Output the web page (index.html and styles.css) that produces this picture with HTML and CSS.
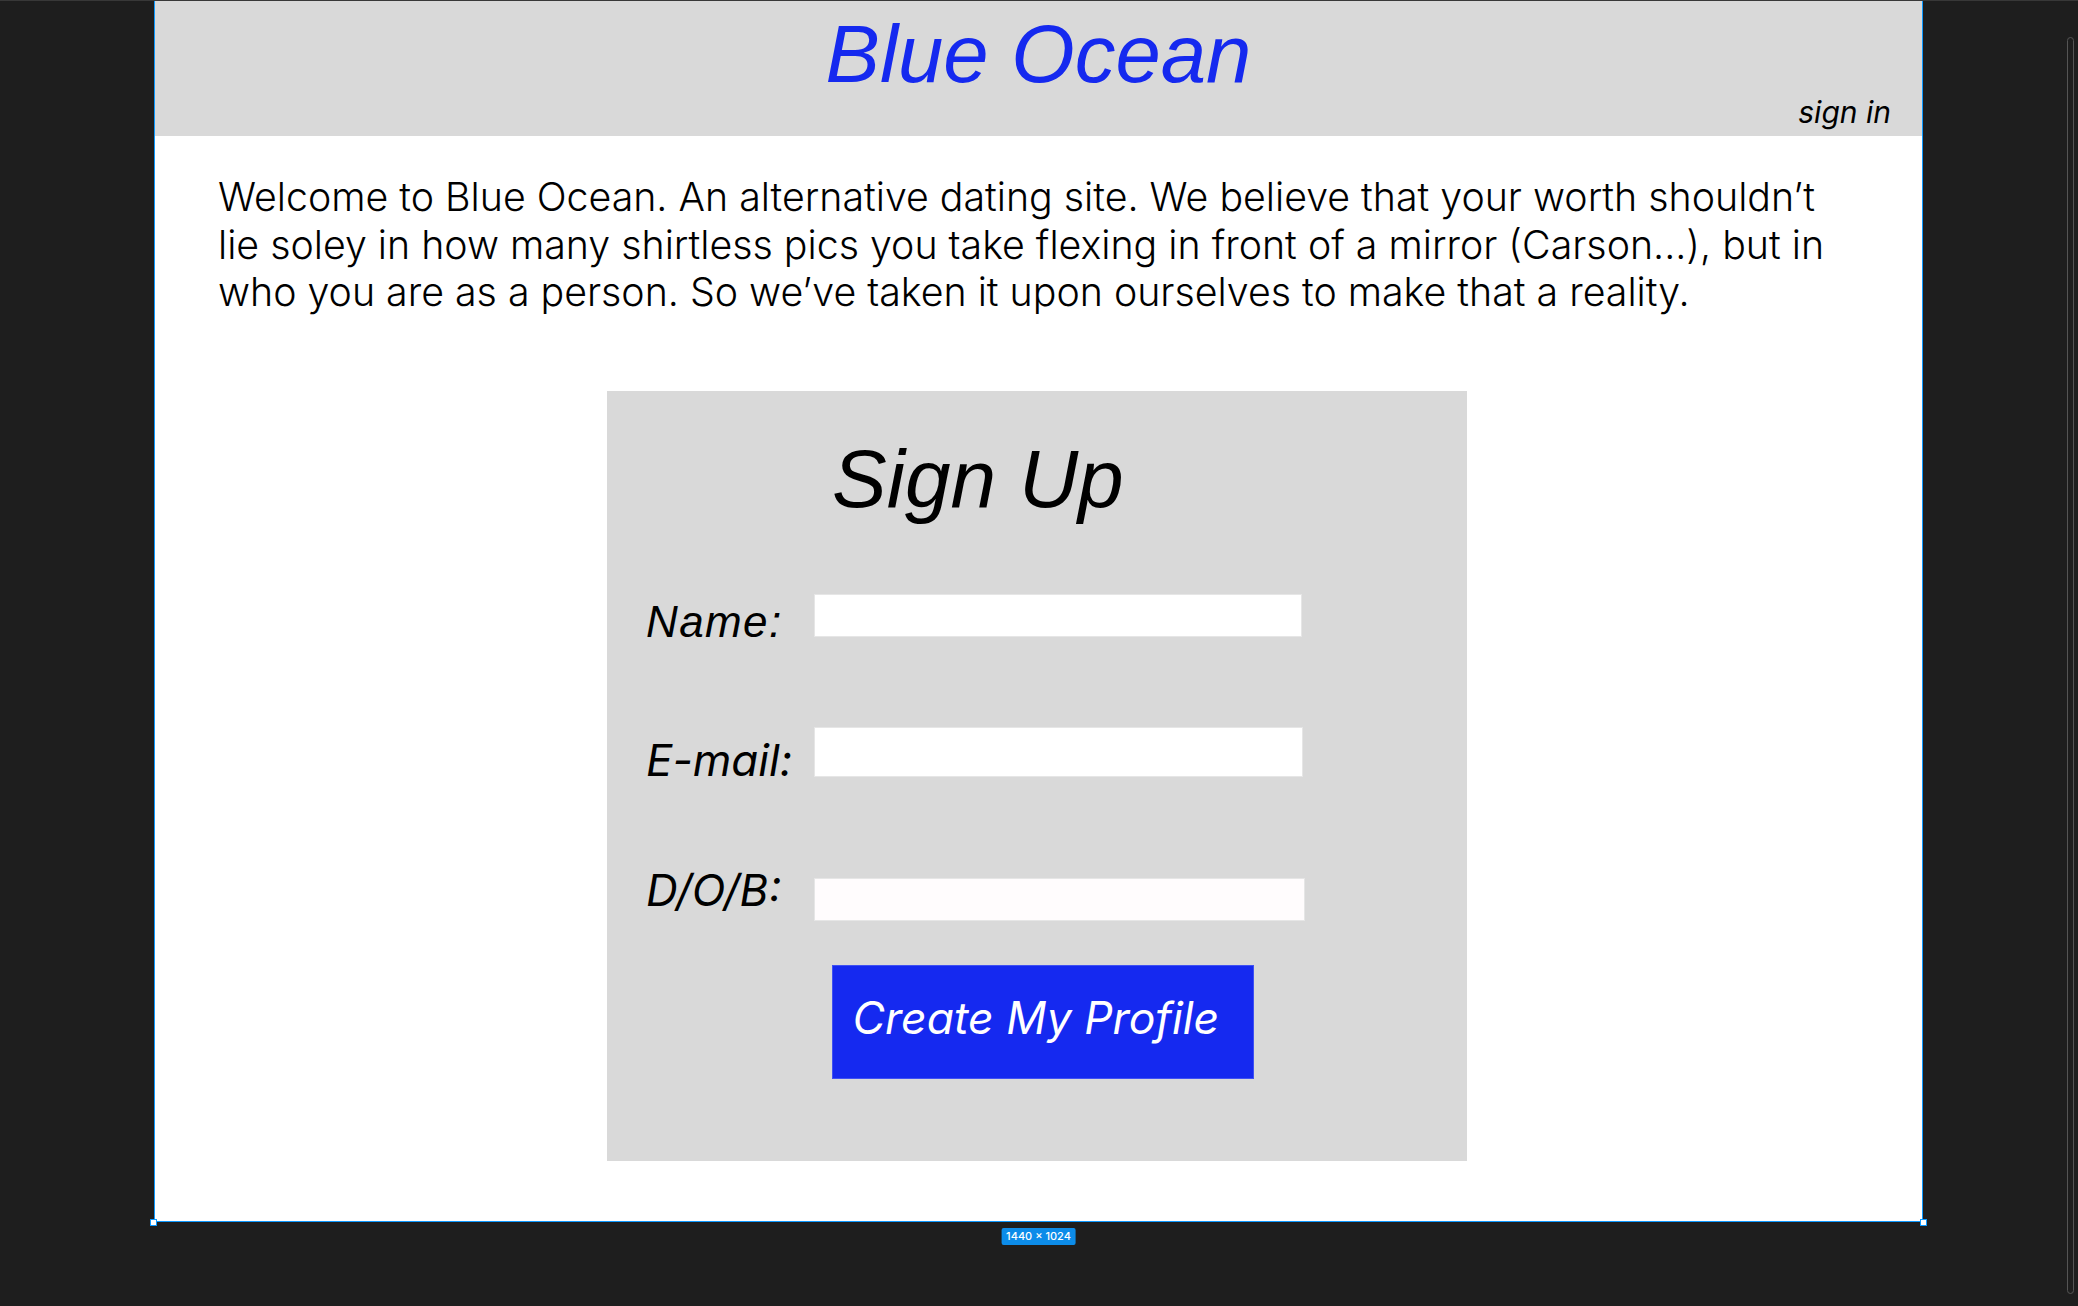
FILE: index.html
```html
<!DOCTYPE html>
<html lang="en">
<head>
<meta charset="utf-8">
<title>Blue Ocean</title>
<link rel="stylesheet" href="styles.css">
</head>
<body>
<div class="canvas">
  <div class="frame">
    <header class="site-header">
      <h1 class="brand">Blue Ocean</h1>
      <a class="signin">sign in</a>
    </header>
    <p class="intro">Welcome to Blue Ocean. An alternative dating site. We believe that your worth shouldn’t<br>lie soley in how many shirtless pics you take flexing in front of a mirror (Carson...), but in<br>who you are as a person. So we’ve taken it upon ourselves to make that a reality.</p>
    <section class="signup">
      <h2 class="signup-title">Sign Up</h2>
      <div class="row row-name">
        <label class="label label-arial">Name:</label>
        <input class="field field-name" type="text">
      </div>
      <div class="row row-email">
        <label class="label label-inter">E-mail:</label>
        <input class="field field-email" type="text">
      </div>
      <div class="row row-dob">
        <label class="label label-inter">D/O/B:</label>
        <input class="field field-dob" type="text">
      </div>
      <button class="create-btn">Create My Profile</button>
    </section>
    <span class="handle handle-bl"></span>
    <span class="handle handle-br"></span>
    <span class="size-badge">1440 × 1024</span>
  </div>
  <div class="scrollbar"></div>
</div>
</body>
</html>
```
FILE: styles.css
```css
html, body {
  margin: 0;
  padding: 0;
}
body {
  background: #1e1e1e;
  width: 2078px;
  height: 1306px;
  overflow: hidden;
  font-family: "Inter", "Liberation Sans", sans-serif;
}
.canvas {
  position: relative;
  height: 1306px;
  border-top: 1px solid #383838;
  box-sizing: border-box;
}
.frame {
  position: relative;
  margin-left: 154px;
  width: 1767px;
  height: 1220px;
  background: #ffffff;
  border-left: 1px solid #0d99ff;
  border-right: 1px solid #0d99ff;
  border-bottom: 1px solid #0d99ff;
  display: flex;
  flex-direction: column;
}
.site-header {
  height: 135px;
  box-sizing: border-box;
  background: #d9d9d9;
  padding-top: 12.2px;
  display: flex;
  flex-direction: column;
}
.brand {
  margin: 0;
  font-family: "Liberation Sans", Arial, sans-serif;
  font-style: italic;
  font-weight: 400;
  font-size: 81.5px;
  line-height: 81.5px;
  color: #1529ef;
  text-align: center;
}
.signin {
  align-self: flex-end;
  margin-top: 2.7px;
  margin-right: 31px;
  font-family: "Inter", sans-serif;
  font-style: italic;
  font-size: 30px;
  line-height: 30px;
  color: #000;
}
.intro {
  margin: 37px 0 0 63px;
  font-family: "Inter", sans-serif;
  font-weight: 300;
  font-size: 39.3px;
  line-height: 47.5px;
  color: #000;
  white-space: nowrap;
}
.signup {
  margin: 75.5px 0 0 452px;
  width: 860px;
  height: 770px;
  box-sizing: border-box;
  background: #d9d9d9;
  padding-top: 46.6px;
  display: flex;
  flex-direction: column;
}
.signup-title {
  margin: 0 0 0 225px;
  font-family: "Liberation Sans", Arial, sans-serif;
  font-style: italic;
  font-weight: 400;
  font-size: 82px;
  line-height: 82px;
  color: #000;
}
.row {
  display: flex;
  align-items: flex-start;
  padding-left: 39px;
}
.label {
  flex: none;
  width: 168px;
  color: #000;
  font-style: italic;
}
.label-arial {
  font-family: "Liberation Sans", Arial, sans-serif;
  font-size: 44px;
  line-height: 44px;
  letter-spacing: 1.4px;
}
.label-inter {
  font-family: "Inter", sans-serif;
  font-size: 44px;
  line-height: 44px;
}
.field {
  flex: none;
  margin: 0;
  padding: 0;
  box-sizing: border-box;
  background: #ffffff;
  border: 1px solid #e6e6e6;
  outline: none;
}
.row-name { margin-top: 74.4px; }
.row-name .label { margin-top: 5.7px; }
.field-name { width: 488px; height: 43px; }
.row-email { margin-top: 83.3px; }
.row-email .label { margin-top: 11px; }
.field-email { width: 489px; height: 50px; }
.row-dob { margin-top: 86px; }
.field-dob { width: 491px; height: 43px; margin-top: 10px; background: #fffcfd; }
.create-btn {
  margin: 44px 0 0 225px;
  width: 422px;
  height: 114px;
  box-sizing: border-box;
  padding: 0 0 7px 19.5px;
  text-align: left;
  background: #1529f0;
  border: 1px solid #3f51f3;
  color: #ffffff;
  font-family: "Inter", sans-serif;
  font-style: italic;
  font-size: 44.5px;
  line-height: 45px;
  white-space: nowrap;
  cursor: pointer;
}
.handle {
  position: absolute;
  bottom: -5px;
  width: 7px;
  height: 7px;
  box-sizing: border-box;
  background: #ffffff;
  border: 1px solid #0d99ff;
}
.handle-bl { left: -5px; }
.handle-br { right: -5px; }
.size-badge {
  position: absolute;
  left: 50%;
  top: calc(100% + 7px);
  transform: translateX(-50%);
  height: 17px;
  padding: 0 5px;
  border-radius: 2px;
  background: #0c8ce9;
  color: #ffffff;
  font-family: "Inter", sans-serif;
  font-size: 11px;
  font-weight: 500;
  line-height: 17px;
  white-space: nowrap;
}
.scrollbar {
  position: absolute;
  left: 2067px;
  top: 36px;
  width: 7px;
  height: 1257px;
  box-sizing: border-box;
  border: 1px solid #555555;
  border-radius: 4px;
}
```
